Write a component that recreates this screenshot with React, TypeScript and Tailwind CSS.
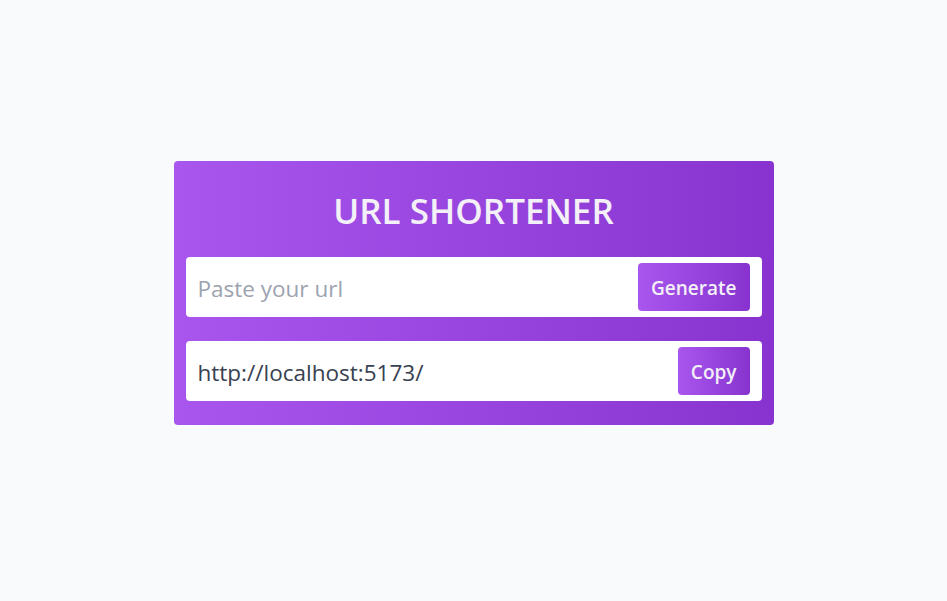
import { useState } from "react";

const font = { fontFamily: '"Open Sans", "Noto Sans", sans-serif' };

export default function App() {
  const [url, setUrl] = useState("");
  const short = "http://localhost:5173/";

  return (
    <div className="min-h-screen bg-[#f9fafb] pt-[161px]" style={font}>
      <div className="mx-auto w-[600px] rounded-sm bg-gradient-to-r from-[#a856ee] to-[#8833cf] px-3 pt-[30px] pb-6">
        {/* Title */}
        <h1 className="mb-[26px] text-center text-[35px] leading-10 font-semibold text-[#f3f0f7]">
          URL SHORTENER
        </h1>

        <div className="flex flex-col gap-6">
          {/* Input row */}
          <div className="flex h-[60px] items-center rounded-sm bg-white pr-3 pl-3">
            <input
              value={url}
              onChange={(e) => setUrl(e.target.value)}
              placeholder="Paste your url"
              className="min-w-0 flex-1 pt-[3px] text-[22.5px] text-[#374151] outline-none placeholder:text-[#9ca3af]"
            />
            <button className="h-12 rounded-sm bg-gradient-to-r from-[#a856ee] to-[#8833cf] px-[13px] pt-[3px] text-[19px] font-semibold text-[#f3f0f7]">
              Generate
            </button>
          </div>

          {/* Result row */}
          <div className="flex h-[60px] items-center rounded-sm bg-white pr-3 pl-3">
            <input
              value={short}
              readOnly
              className="min-w-0 flex-1 pt-[3px] text-[22.5px] text-[#374151] outline-none"
            />
            <button className="h-12 rounded-sm bg-gradient-to-r from-[#a856ee] to-[#8833cf] px-[13px] pt-[3px] text-[19px] font-semibold text-[#f3f0f7]">
              Copy
            </button>
          </div>
        </div>
      </div>
    </div>
  );
}
